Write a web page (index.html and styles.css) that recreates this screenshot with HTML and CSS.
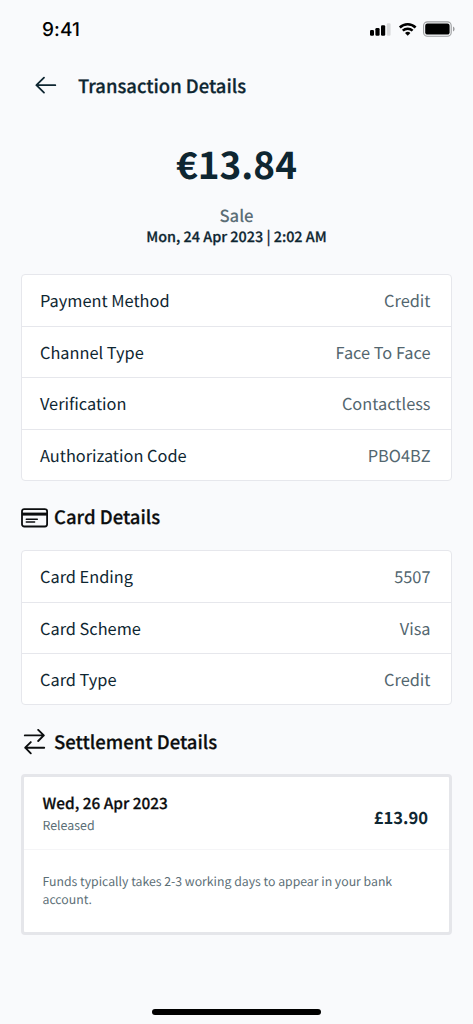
FILE: index.html
```
<!DOCTYPE html>
<html lang="en">
<head>
<meta charset="utf-8">
<meta name="viewport" content="width=device-width, initial-scale=1">
<title>Transaction Details</title>
<link rel="stylesheet" href="styles.css">
</head>
<body>
<div class="screen">
  <div class="status-bar">
    <span class="clock">9:41</span>
    <svg class="status-icons" width="88" height="20" viewBox="0 0 88 20">
      <rect x="1" y="10" width="4" height="5.8" rx="1.2"/>
      <rect x="6.4" y="8" width="4.2" height="7.8" rx="1.2"/>
      <rect x="12" y="5.300" width="4.200" height="10.500" rx="1.200"/>
      <rect x="17.800" y="3.300" width="3.800" height="12.500" rx="1.200" fill="#d9dadc"/>
      <g fill="none" stroke="#000" stroke-width="2.500">
        <path d="M30.800 7.500a11.200 11.200 0 0 1 15.800 0"/>
        <path d="M33.800 10.700a7 7 0 0 1 9.800 0"/>
      </g>
      <path d="M38.700 15.800l-2.700-2.800a3.800 3.800 0 0 1 5.400 0z"/>
      <rect x="54.600" y="1.900" width="27.600" height="14.400" rx="3.800" fill="none" stroke="#9b9c9e" stroke-width="1.100"/>
      <rect x="56.200" y="3.600" width="24.400" height="11" rx="2.200"/>
      <path d="M84 6.600v5c1.100-.4 1.600-1.400 1.600-2.500s-.5-2.100-1.600-2.500z" fill="#9b9c9e"/>
    </svg>
  </div>

  <header class="header">
    <svg class="back" width="22" height="18" viewBox="0 0 22 18">
      <path d="M20.300 9.200H1.400M9 1.700L1.400 9.200L9 16.600"/>
    </svg>
    <h1 class="title">Transaction Details</h1>
  </header>

  <section class="summary">
    <div class="amount">€13.84</div>
    <div class="kind">Sale</div>
    <div class="date">Mon, 24 Apr 2023 | 2:02 AM</div>
  </section>

  <dl class="list">
    <div class="row"><dt>Payment Method</dt><dd>Credit</dd></div>
    <div class="row"><dt>Channel Type</dt><dd>Face To Face</dd></div>
    <div class="row"><dt>Verification</dt><dd>Contactless</dd></div>
    <div class="row"><dt>Authorization Code</dt><dd>PBO4BZ</dd></div>
  </dl>

  <h2 class="section-title">
    <svg width="27" height="20" viewBox="0 0 27 20">
      <rect x="1" y="1.100" width="25.100" height="17.400" rx="2.200" fill="none" stroke="#0b0d0e" stroke-width="1.800"/>
      <path d="M1 6.100h25" stroke="#0b0d0e" stroke-width="3"/>
      <path d="M5.300 11.300h11M5.300 14h8.300" stroke="#0b0d0e" stroke-width="1.500" stroke-linecap="round"/>
    </svg>
    <span>Card Details</span>
  </h2>

  <dl class="list">
    <div class="row"><dt>Card Ending</dt><dd>5507</dd></div>
    <div class="row"><dt>Card Scheme</dt><dd>Visa</dd></div>
    <div class="row"><dt>Card Type</dt><dd>Credit</dd></div>
  </dl>

  <h2 class="section-title">
    <svg width="27" height="26" viewBox="0 0 27 26" fill="none" stroke="#0b0d0e" stroke-width="1.900" stroke-linecap="round" stroke-linejoin="round">
      <path d="M3.800 6.400H22.800M17.200 .9L22.800 6.400L17.200 12"/>
      <path d="M23.200 18.700H4.200M9.800 13.100L4.200 18.700L9.800 24.300"/>
    </svg>
    <span>Settlement Details</span>
  </h2>

  <section class="settlement">
    <div class="settlement-head">
      <div>
        <div class="settlement-date">Wed, 26 Apr 2023</div>
        <div class="settlement-state">Released</div>
      </div>
      <div class="settlement-amount">£13.90</div>
    </div>
    <p class="note">Funds typically takes 2-3 working days to appear in your bank account.</p>
  </section>

  <div class="home-indicator"></div>
</div>
</body>
</html>
```
FILE: styles.css
```
* {
  box-sizing: border-box;
  margin: 0;
  padding: 0;
}

body {
  background: #f9fafc;
  color: #0e2631;
  font-family: "Noto Sans CJK SC", "Noto Sans", sans-serif;
  text-rendering: geometricPrecision;
}

.screen {
  display: flex;
  flex-direction: column;
  width: 473px;
  height: 1024px;
  padding: 0 21px;
  overflow: hidden;
}

.status-bar {
  display: flex;
  align-items: center;
  justify-content: space-between;
  height: 57px;
  padding: 2px 0 0 21px;
}

.clock {
  color: #000;
  font: 500 19px/24px Inter, sans-serif;
  letter-spacing: 0.1px;
}

.status-icons {
  margin-right: -5px;
}

.header {
  display: flex;
  align-items: center;
  gap: 21px;
  height: 56px;
  padding-left: 14px;
}

.back {
  fill: none;
  stroke: #0e2631;
  stroke-width: 1.8;
  stroke-linecap: round;
  stroke-linejoin: round;
}

.title {
  padding-top: 2px;
  font-size: 18.45px;
  font-weight: 500;
  line-height: 24px;
  -webkit-text-stroke: 0.25px currentColor;
}

.summary {
  height: 161px;
  padding-top: 27px;
  text-align: center;
}

.amount {
  font-size: 36.9px;
  font-weight: 700;
  line-height: 46px;
}

.kind {
  margin-top: 18px;
  color: #5b6e76;
  font-size: 16.7px;
  font-weight: 500;
  line-height: 22px;
}

.date {
  padding-top: 1px;
  font-size: 14.4px;
  font-weight: 500;
  line-height: 20px;
  -webkit-text-stroke: 0.25px currentColor;
}

.list {
  border: 1px solid #e6e7ec;
  border-radius: 4px;
  background: #fff;
}

.row {
  display: flex;
  align-items: center;
  justify-content: space-between;
  height: 51.5px;
  padding: 0 20.5px 0.6px 18px;
  font-size: 16.35px;
  line-height: 24px;
}

.row + .row {
  border-top: 1px solid #e6e7ec;
}

.row:first-child {
  height: 50.7px;
  padding-bottom: 0;
}

.row:last-child {
  height: 51.3px;
}

.row dd {
  color: #53666f;
}

.section-title {
  display: flex;
  align-items: center;
  gap: 6px;
  height: 69px;
  padding-top: 5px;
  color: #0b0d0e;
  font-size: 18.5px;
  font-weight: 500;
  line-height: 26px;
  -webkit-text-stroke: 0.25px currentColor;
}

.section-title span {
  padding-bottom: 1px;
}

.settlement {
  height: 161px;
  border: 3px solid #e5e6ea;
  border-radius: 4px;
  background: #fff;
}

.settlement-head {
  display: flex;
  align-items: center;
  justify-content: space-between;
  height: 73px;
  padding: 0 21px 1px 18.5px;
  border-bottom: 1px solid #f5f5f7;
}

.settlement-date {
  color: #0b0d0e;
  font-size: 15.4px;
  font-weight: 500;
  line-height: 24px;
  -webkit-text-stroke: 0.25px currentColor;
}

.settlement-state {
  color: #5b6e76;
  font-size: 12.4px;
  line-height: 20px;
}

.settlement-amount {
  padding-top: 8px;
  font-size: 16.6px;
  font-weight: 700;
  line-height: 22px;
}

.note {
  padding: 22px 50px 0 18.5px;
  color: #5b6e76;
  font-size: 12.28px;
  line-height: 18px;
}

.home-indicator {
  align-self: center;
  width: 169px;
  height: 6px;
  margin-top: 74px;
  border-radius: 3px;
  background: #000;
}
```
